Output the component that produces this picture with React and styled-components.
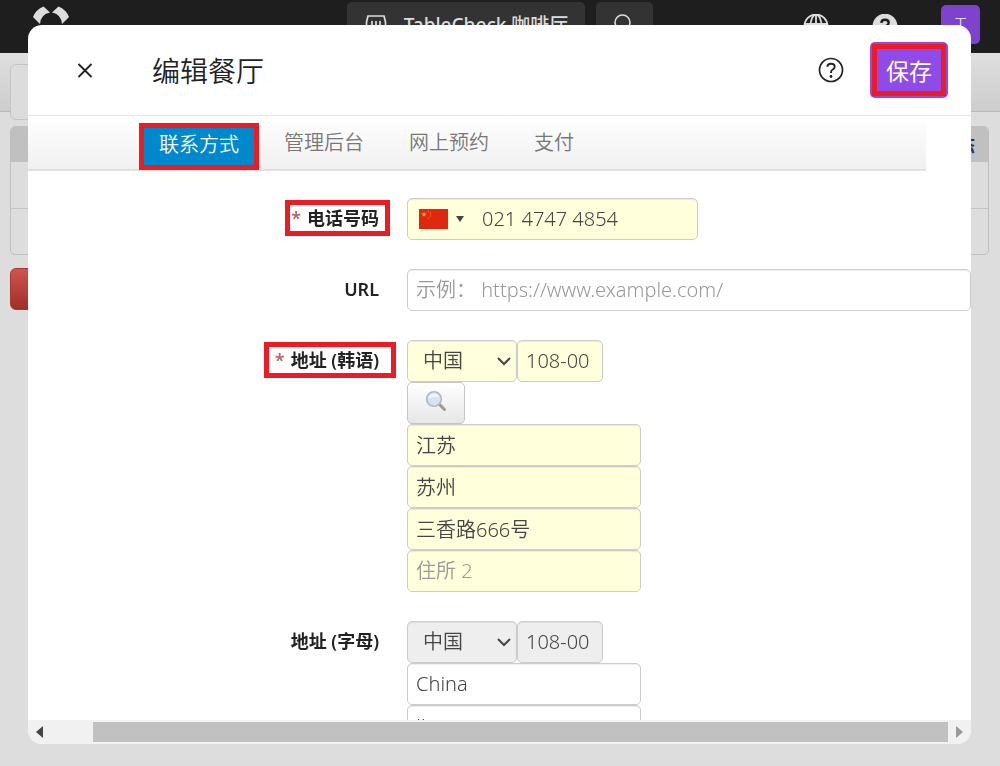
import React from 'react';
import styled, { createGlobalStyle, css } from 'styled-components';

const GlobalStyle = createGlobalStyle`
    * {
        box-sizing: border-box;
    }

    body {
        margin: 0;
        background: #ddd;
        color: #222;
        font-family: "Noto Sans", "Noto Sans CJK SC", sans-serif;
        font-size: 20px;
    }

    button, input, select {
        font: inherit;
        margin: 0;
    }
`

/* page behind the dialog */

const Page = styled.div`
    height: 100vh;
    overflow: hidden;
`

const NavBar = styled.header`
    display: grid;
    grid-template-columns: 1fr auto 1fr;
    height: 53px;
    padding: 2px 20px 5px;
    background: #1e1e1e;
    color: #ddd;
`

const NavLeft = styled.div`
    padding-left: 12px;
`

const NavCenter = styled.div`
    display: flex;
    gap: 11px;
`

const NavRight = styled.div`
    display: flex;
    align-items: center;
    justify-content: flex-end;
    gap: 43px;

    svg {
        display: block;
    }
`

const NavPill = styled.button`
    display: flex;
    align-items: center;
    gap: 16px;
    height: 46px;
    padding: 0 17px;
    border: 0;
    border-radius: 5px;
    background: #333;
    color: #ddd;
    font-size: 19px;
    font-weight: 500;
    line-height: 46px;
    white-space: nowrap;
`

const Avatar = styled.button`
    align-self: flex-start;
    width: 39px;
    height: 39px;
    margin-top: 3px;
    padding: 0;
    border: 0;
    border-radius: 5px;
    background: #7f42cc;
    color: #ddd;
    font-weight: 300;
    line-height: 39px;
`

const ToolBar = styled.div`
    height: 59px;
    padding: 11px 10px 0;
    border-bottom: 1px solid #b9b9b9;
    background: linear-gradient(#dfdfdf, #cdcdcd);
`

const ToolGroup = styled.div`
    width: 50%;
    height: 56px;
    border: 1px solid #c4c4c4;
    border-radius: 6px;
    background: #dcdcdc;
`

const Main = styled.main`
    padding: 14px 11px 0 10px;
`

const Table = styled.table`
    width: 100%;
    border: 1px solid #c0c0c0;
    border-radius: 5px;
    border-spacing: 0;
    overflow: hidden;

    th {
        height: 35px;
        padding: 0 13px 0 0;
        background: #c0c0c0;
        color: #1b3a5c;
        font-size: 18px;
        line-height: 24px;
        text-align: right;
    }

    td {
        height: 46px;
        padding: 0;
    }

    tr + tr + tr td {
        border-top: 1px solid #c4c4c4;
    }
`

const DeleteButton = styled.button`
    width: 120px;
    height: 42px;
    margin-top: 13px;
    border: 1px solid #a33;
    border-radius: 6px;
    background: linear-gradient(#cf5450, #a02e2a);
    color: #fff;
`

/* dialog */

const Backdrop = styled.div`
    position: fixed;
    inset: 0;
    display: flex;
    padding: 25px 29px 22px 28px;
`

const Dialog = styled.section`
    flex: 1;
    min-width: 0;
    display: flex;
    flex-direction: column;
    overflow: hidden;
    border-radius: 14px;
    background: #fff;
`

const DialogHeader = styled.header`
    flex: none;
    display: flex;
    align-items: center;
    height: 91px;
    padding: 0 23px 0 44px;
    border-bottom: 1px solid #e5e5e5;
`

const IconButton = styled.button`
    display: flex;
    padding: 0;
    border: 0;
    background: none;
    color: #222;
    cursor: pointer;
`

const Title = styled.h1`
    flex: 1;
    margin: 0 0 0 54px;
    padding-top: 2px;
    font-size: 28px;
    font-weight: 350;
    line-height: 40px;
`

const SaveButton = styled.button`
    height: 56px;
    margin-left: 26px;
    padding: 2px;
    border: 0;
    border-radius: 5px;
    background: #8f4ae8;
    color: #fff;
    font-size: 23px;
    line-height: 44px;
    cursor: pointer;

    span {
        display: block;
        padding: 0 9px;
        border: 5px solid #ed1c24;
        height: 52px;
    }
`

const Tabs = styled.nav`
    flex: none;
    display: flex;
    align-items: center;
    gap: 5px;
    height: 55px;
    margin-right: 45px;
    padding-left: 111px;
    border-bottom: 2px solid #e0e0e0;
    background: linear-gradient(#fff, #f0f0f0);
`

const Tab = styled.button`
    height: 47px;
    padding: 0 20px;
    border: 0;
    background: none;
    color: #777;
    font-weight: 350;
    line-height: 34px;
    cursor: pointer;

    ${({ $active }) => $active && css`
        align-self: flex-end;
        margin-bottom: -1px;
        padding: 0 15px 3px;
        border: 5px solid #ed1c24;
        background: #08c;
        color: #fff;
    `}
`

const Form = styled.form`
    flex: 1;
    min-height: 0;
    overflow: hidden;
    display: flex;
    flex-direction: column;
    gap: 29px;
    padding-top: 27px;
`

const Row = styled.div`
    flex: none;
    display: grid;
    grid-template-columns: 351px 1fr;
    column-gap: 28px;
`

const LabelCell = styled.div`
    display: flex;
    align-items: center;
    justify-content: flex-end;
    height: 40px;
`

const Label = styled.label`
    color: #222;
    font-size: 18px;
    font-weight: 600;
    line-height: 26px;
    white-space: nowrap;

    ${({ $mark }) => $mark && css`
        margin-right: ${$mark === 'wide' ? '-17px' : '-11px'};
        padding: ${$mark === 'wide' ? '0 12px 0 6px' : '0 6px 0 1px'};
        border: 5px solid #ed1c24;
    `}
`

const Required = styled.abbr`
    margin-right: 6px;
    color: #b5676a;
    text-decoration: none;
`

const Controls = styled.div`
    display: flex;
    flex-direction: column;
    align-items: flex-start;
    min-width: 0;
`

const Line = styled.div`
    display: flex;
`

const fieldBox = css`
    height: 42px;
    border: 1px solid #ccc;
    border-radius: 5px;
    background: ${({ $tone }) => ({ required: '#ffffdb', locked: '#eee' }[$tone] || '#fff')};
    box-shadow: inset 0 1px 1px rgba(0, 0, 0, .075);
    color: #444;
    font-weight: 350;
    opacity: 1;
    outline: 0;
`

const widths = {
    phone: '291px',
    zip: '86px',
    address: '234px',
    full: '100%',
}

const Input = styled.input`
    ${fieldBox}
    width: ${({ $size }) => widths[$size]};
    padding: 0 8px 1px;
    padding-left: ${({ $size }) => ($size === 'phone' ? '74px' : '8px')};

    &::placeholder {
        color: #999;
        opacity: 1;
    }
`

const Select = styled.select`
    ${fieldBox}
    width: 110px;
    padding: 0 15px 1px;
    appearance: none;
`

const SelectWrap = styled.div`
    position: relative;

    svg {
        position: absolute;
        top: 16px;
        right: 5px;
        pointer-events: none;
    }
`

const PhoneWrap = styled.div`
    position: relative;
`

const CountryButton = styled.button`
    position: absolute;
    top: 1px;
    left: 1px;
    display: flex;
    align-items: center;
    gap: 8px;
    height: 40px;
    padding: 0 8px 0 11px;
    border: 0;
    background: none;
    cursor: pointer;
`

const SearchButton = styled.button`
    display: flex;
    align-items: center;
    justify-content: center;
    width: 58px;
    height: 42px;
    padding: 0 0 4px;
    border: 1px solid #c5c5c5;
    border-radius: 5px;
    background: linear-gradient(#fff, #e6e6e6);
    cursor: pointer;
`

const ScrollBar = styled.div`
    flex: none;
    display: flex;
    align-items: center;
    height: 24px;
    background: #f1f1f1;

    button {
        display: flex;
        padding: 0 8px;
        border: 0;
        background: none;
    }
`

const Track = styled.div`
    flex: 1;
    display: flex;
    height: 20px;
    margin-bottom: 1px;
    padding-left: 42px;
`

const Thumb = styled.div`
    flex: 1;
    background: #c1c1c1;
`

const Logo = () => (
    <svg width="38" height="44" viewBox="0 0 38 44" fill="#ddd">
        <path d="M11.500 4.500 18 10.500Q9 12 8 22L1 15Q4 7.500 11.500 4.500Z" />
        <path d="M26.500 4.500 20 10.500Q29 12 30 22L37 15Q34 7.500 26.500 4.500Z" />
    </svg>
)

const ShopIcon = () => (
    <svg width="24" height="24" viewBox="0 0 24 24" fill="none" stroke="#ddd" strokeWidth="1.700">
        <path d="M4 3H20L21.500 9V19Q21.500 21 20 21H4Q2.500 21 2.500 19V9Z M8 8V14 M12 8V14 M16 8V14" />
    </svg>
)

const SearchIcon = () => (
    <svg width="23" height="24" viewBox="0 0 23 24" fill="none" stroke="#ddd" strokeWidth="1.600">
        <circle cx="9.500" cy="9.500" r="7.500" />
        <path d="M15 15 21 21" />
    </svg>
)

const GlobeIcon = () => (
    <svg width="26" height="26" viewBox="0 0 26 26" fill="none" stroke="#ddd" strokeWidth="1.800">
        <circle cx="13" cy="12" r="11.500" />
        <ellipse cx="13" cy="12" rx="5.500" ry="11.500" />
        <path d="M13 0V24 M2 10H24 M2 16H24" />
    </svg>
)

const HelpMark = ({ filled }) => (
    <svg width="26" height="26" viewBox={filled ? '0 1 26 26' : '0 0 26 26'} fill="none">
        <circle cx="13" cy="13" r="11.500" fill={filled ? '#ddd' : 'none'} stroke={filled ? '#ddd' : '#222'} strokeWidth="1.700" />
        <path d="M9.300 9.800Q9.500 6.700 13 6.700Q16.700 6.700 16.700 9.800Q16.700 11.500 14.800 12.500Q13 13.400 13 15.500V16" stroke={filled ? '#1e1e1e' : '#222'} strokeWidth={filled ? 2.400 : 1.900} />
        <circle cx="13" cy="19.500" r="1.400" fill={filled ? '#1e1e1e' : '#222'} />
    </svg>
)

const CloseIcon = () => (
    <svg width="26" height="26" viewBox="0 0 26 26" stroke="#222" strokeWidth="1.800">
        <path d="M6.500 7 19.500 20 M19.500 7 6.500 20" />
    </svg>
)

const Chevron = () => (
    <svg width="16" height="10" viewBox="0 0 16 10" fill="none" stroke="#444" strokeWidth="2">
        <path d="M2 2 8 8 14 2" />
    </svg>
)

const Flag = () => (
    <svg width="29" height="20" viewBox="0 0 29 20">
        <rect width="29" height="20" fill="#de2910" />
        <path d="M5 2.500 5.700 4.500H7.800L6.100 5.800 6.700 7.800 5 6.600 3.300 7.800 3.900 5.800 2.200 4.500H4.300Z" fill="#ffb400" />
        <g fill="#ef7a10">
            <circle cx="9.500" cy="2.500" r=".7" />
            <circle cx="11.500" cy="4.300" r=".7" />
            <circle cx="11.500" cy="6.900" r=".7" />
            <circle cx="9.500" cy="9" r=".7" />
        </g>
    </svg>
)

const Caret = () => (
    <svg width="8" height="6" viewBox="0 0 8 6"><path d="M0 0H8L4 6Z" fill="#444" /></svg>
)

const Magnifier = () => (
    <svg width="22" height="22" viewBox="0 0 22 22">
        <path d="M14 14 19.500 19.500" stroke="#999" strokeWidth="3" strokeLinecap="round" />
        <circle cx="9" cy="9" r="7.300" fill="#d3e5f3" stroke="#b4b8bc" strokeWidth="1.600" />
        <path d="M3.500 9Q4 4 9 3.500Q13 3.500 14.500 7Q9 6 3.500 9Z" fill="#edf6fc" />
    </svg>
)

const tabs = ['联系方式', '管理后台', '网上预约', '支付']

const addressLines = [
    { label: '省份', value: '江苏' },
    { label: '城市', value: '苏州' },
    { label: '住所 1', value: '三香路666号' },
    { label: '住所 2', value: '', placeholder: '住所 2' },
]

const Field = ({ id, label, required, mark, children }) => (
    <Row>
        <LabelCell>
            <Label htmlFor={id} $mark={mark}>
                {required && <Required title="必填">*</Required>}
                {label}
            </Label>
        </LabelCell>
        <Controls>{children}</Controls>
    </Row>
)

const CountrySelect = ({ id, tone, disabled }) => (
    <SelectWrap>
        <Select id={id} $tone={tone} disabled={disabled}>
            <option>中国</option>
        </Select>
        <Chevron />
    </SelectWrap>
)

const Background = () => (
    <Page>
        <NavBar>
            <NavLeft><Logo /></NavLeft>
            <NavCenter>
                <NavPill><ShopIcon />TableCheck 咖啡厅</NavPill>
                <NavPill aria-label="搜索"><SearchIcon /></NavPill>
            </NavCenter>
            <NavRight>
                <GlobeIcon />
                <HelpMark filled />
                <Avatar>T</Avatar>
            </NavRight>
        </NavBar>
        <ToolBar>
            <ToolGroup />
        </ToolBar>
        <Main>
            <Table>
                <tbody>
                    <tr><th>状态</th></tr>
                    <tr><td /></tr>
                    <tr><td /></tr>
                </tbody>
            </Table>
            <DeleteButton aria-label="删除" />
        </Main>
    </Page>
)

const App = () => {
    return (
        <>
            <GlobalStyle />
            <Background />
            <Backdrop>
                <Dialog role="dialog" aria-labelledby="title">
                    <DialogHeader>
                        <IconButton aria-label="关闭"><CloseIcon /></IconButton>
                        <Title id="title">编辑餐厅</Title>
                        <IconButton aria-label="帮助"><HelpMark /></IconButton>
                        <SaveButton><span>保存</span></SaveButton>
                    </DialogHeader>
                    <Tabs>
                        {tabs.map((tab, i) => (
                            <Tab key={tab} $active={i === 0}>{tab}</Tab>
                        ))}
                    </Tabs>
                    <Form>
                        <Field id="phone" label="电话号码" required mark="tight">
                            <PhoneWrap>
                                <Input id="phone" type="tel" $size="phone" $tone="required" defaultValue="021 4747 4854" />
                                <CountryButton type="button" aria-label="国家"><Flag /><Caret /></CountryButton>
                            </PhoneWrap>
                        </Field>
                        <Field id="url" label="URL">
                            <Input id="url" type="url" $size="full" placeholder="示例： https://www.example.com/" />
                        </Field>
                        <Field id="country" label="地址 (韩语)" required mark="wide">
                            <Line>
                                <CountrySelect id="country" tone="required" />
                                <Input aria-label="邮编" $size="zip" $tone="required" defaultValue="108-00" />
                            </Line>
                            <SearchButton type="button" aria-label="查找"><Magnifier /></SearchButton>
                            {addressLines.map(({ label, value, placeholder }) => (
                                <Input key={label} aria-label={label} $size="address" $tone="required" defaultValue={value} placeholder={placeholder} />
                            ))}
                        </Field>
                        <Field id="country-latin" label="地址 (字母)">
                            <Line>
                                <CountrySelect id="country-latin" tone="locked" disabled />
                                <Input aria-label="邮编" $size="zip" $tone="locked" defaultValue="108-00" disabled />
                            </Line>
                            <Input aria-label="省份 (字母)" $size="address" defaultValue="China" />
                            <Input aria-label="城市 (字母)" $size="address" defaultValue="Jiangsu" />
                        </Field>
                    </Form>
                    <ScrollBar>
                        <button aria-label="向左"><svg width="7" height="12" viewBox="0 0 7 12"><path d="M7 0V12L0 6Z" fill="#444" /></svg></button>
                        <Track><Thumb /></Track>
                        <button aria-label="向右"><svg width="7" height="12" viewBox="0 0 7 12"><path d="M0 0V12L7 6Z" fill="#999" /></svg></button>
                    </ScrollBar>
                </Dialog>
            </Backdrop>
        </>
    )
}
export default App
